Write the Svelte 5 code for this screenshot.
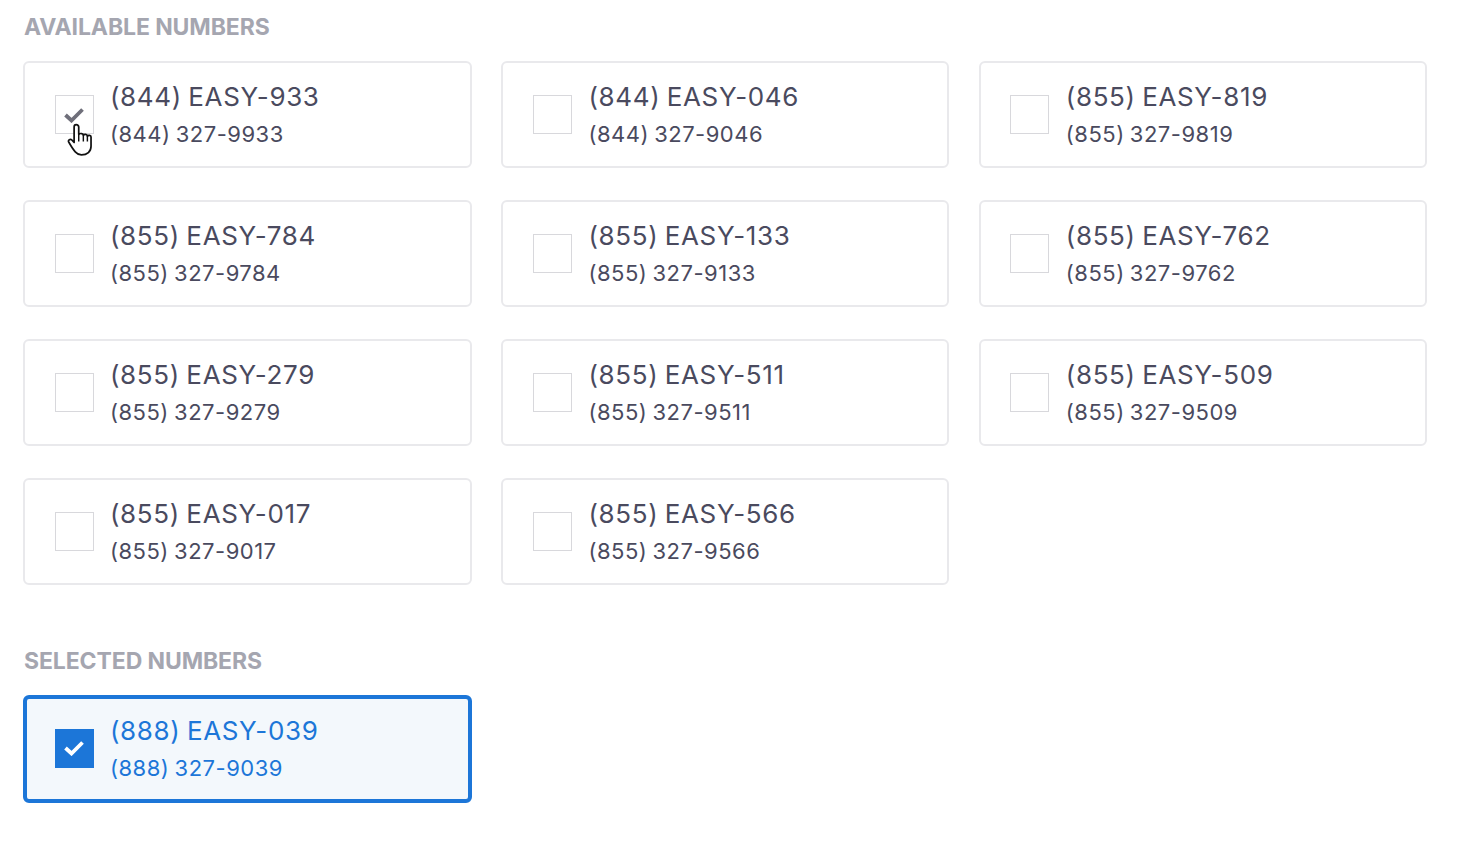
<script lang="ts">
  interface PhoneNumber { vanity: string; digits: string; hovered?: boolean }

  const available: PhoneNumber[] = [
    { vanity: '(844) EASY-933', digits: '(844) 327-9933', hovered: true },
    { vanity: '(844) EASY-046', digits: '(844) 327-9046' },
    { vanity: '(855) EASY-819', digits: '(855) 327-9819' },
    { vanity: '(855) EASY-784', digits: '(855) 327-9784' },
    { vanity: '(855) EASY-133', digits: '(855) 327-9133' },
    { vanity: '(855) EASY-762', digits: '(855) 327-9762' },
    { vanity: '(855) EASY-279', digits: '(855) 327-9279' },
    { vanity: '(855) EASY-511', digits: '(855) 327-9511' },
    { vanity: '(855) EASY-509', digits: '(855) 327-9509' },
    { vanity: '(855) EASY-017', digits: '(855) 327-9017' },
    { vanity: '(855) EASY-566', digits: '(855) 327-9566' },
  ];

  const selected: PhoneNumber[] = [
    { vanity: '(888) EASY-039', digits: '(888) 327-9039' },
  ];
</script>

{#snippet check()}
  <svg class="tick" viewBox="0 0 20 16" aria-hidden="true">
    <path d="M1.5 8 L7.5 13.5 L18.5 2.5" fill="none" stroke="currentColor" stroke-width="3.8" />
  </svg>
{/snippet}

<main class="page">
  <h2 class="heading">AVAILABLE NUMBERS</h2>
  <div class="grid">
    {#each available as n}
      <div class="card">
        <span class="box">
          {#if n.hovered}
            {@render check()}
            <svg class="cursor" viewBox="0 0 26 34" aria-hidden="true">
              <path
                d="M9.5 1.5 C8 1.5 7.4 2.6 7.4 4 V20 L5 17.5 C3.4 16 0.8 17.6 1.8 19.6 C3.8 23 6 27 8.6 29.8 C10.4 31.8 12.5 33 15 33 C21 33 25 29.5 25 24 V14.5 C25 12.4 22 12.2 21.2 13.6 C21.2 11.4 18 11 17 12.6 C17 10.6 13.6 10.2 12.2 11.6 V4 C12.2 2.6 11.2 1.5 9.5 1.5 Z"
                fill="#fff" stroke="#111" stroke-width="1.8" stroke-linejoin="round"
              />
              <path d="M12.2 11.6 V19 M17 12.6 V19 M21.2 13.6 V19" fill="none" stroke="#111" stroke-width="1.5" />
            </svg>
          {/if}
        </span>
        <div class="text">
          <div class="vanity">{n.vanity}</div>
          <div class="digits">{n.digits}</div>
        </div>
      </div>
    {/each}
  </div>

  <h2 class="heading second">SELECTED NUMBERS</h2>
  <div class="grid">
    {#each selected as n}
      <div class="card active">
        <span class="box">{@render check()}</span>
        <div class="text">
          <div class="vanity">{n.vanity}</div>
          <div class="digits">{n.digits}</div>
        </div>
      </div>
    {/each}
  </div>
</main>

<style>
  :global(body) {
    background: #fff;
  }

  .page {
    padding: 13px 36px 0 23px;
    font-family: Inter, "Liberation Sans", sans-serif;
  }

  .heading {
    margin: 0 0 20px 1px;
    font-size: 23px;
    line-height: 28px;
    font-weight: 700;
    letter-spacing: -0.1px;
    color: #a5a6b0;
  }

  .second {
    margin-top: 62px;
  }

  .grid {
    display: grid;
    grid-template-columns: 449px 448px 448px;
    column-gap: 29.4px;
    row-gap: 32px;
  }

  .card {
    box-sizing: border-box;
    height: 107px;
    display: flex;
    align-items: center;
    gap: 16.4px;
    padding-left: 29.6px;
    border: 2px solid #e9e9ec;
    border-radius: 6px;
    background: #fff;
    color: #4a4a5e;
  }

  .box {
    position: relative;
    box-sizing: border-box;
    flex: none;
    width: 39px;
    height: 39px;
    display: flex;
    align-items: center;
    justify-content: center;
    border: 1px solid #d8d8dc;
    background: #fff;
    color: #6f6f7a;
  }

  .tick {
    width: 20px;
    height: 16px;
  }

  .cursor {
    position: absolute;
    left: 11px;
    top: 26px;
    width: 25px;
    height: 35px;
  }

  .text {
    display: flex;
    flex-direction: column;
    gap: 7px;
  }

  .vanity {
    font-size: 26px;
    line-height: 32px;
    letter-spacing: 0.65px;
    word-spacing: -1.5px;
  }

  .digits {
    font-size: 22px;
    line-height: 28px;
    letter-spacing: 0.5px;
    word-spacing: -1.5px;
  }

  .active {
    height: 108px;
    border: 4px solid #1c76d8;
    padding-left: 27.6px;
    padding-bottom: 2px;
    background: #f3f8fc;
    color: #1c76d8;
  }

  .active .box {
    border: none;
    background: #1c76d8;
    color: #fff;
  }
</style>
